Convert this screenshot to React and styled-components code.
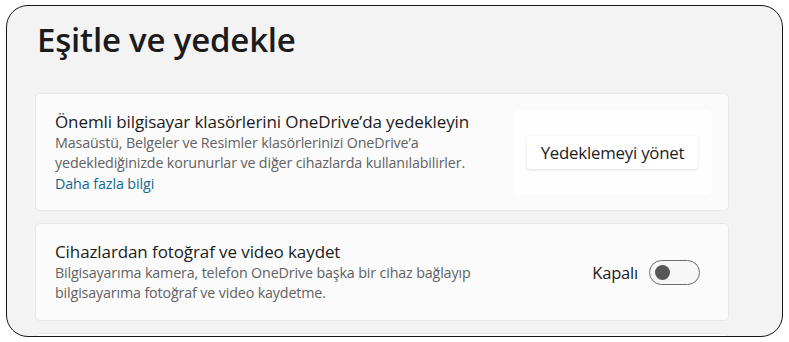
import React from "react";
import styled, { createGlobalStyle } from "styled-components";

const Global = createGlobalStyle`
  html, body { margin: 0; padding: 0; background: #ffffff; }
  body { font-family: "Open Sans", "Noto Sans", sans-serif; }
  #root { width: 789px; height: 342px; overflow: hidden; }
`;

const Frame = styled.div`
  box-sizing: border-box;
  margin: 5px 0 0 6px;
  width: 777px;
  height: 332px;
  border: 1.5px solid #151515;
  border-radius: 22px;
  background: #f3f3f3;
  overflow: hidden;
  padding: 12px 53px 0 28px;
  display: flex;
  flex-direction: column;
`;

const Title = styled.h1`
  margin: 0 0 0 2px;
  font-size: 33px;
  line-height: 44px;
  font-weight: 600;
  color: #1b1b1b;
  letter-spacing: -0.2px;
`;

const Cards = styled.div`
  margin-top: 31px;
  display: flex;
  flex-direction: column;
  gap: 12px;
`;

const Card = styled.div`
  box-sizing: border-box;
  height: ${(p) => p.$h}px;
  flex: none;
  background: #fbfbfb;
  border: 1px solid #e8e8e8;
  border-radius: 5px;
  display: flex;
  align-items: center;
  justify-content: space-between;
  padding: 0 28px 0 19px;
`;

const Text = styled.div`
  display: flex;
  flex-direction: column;
`;

const CardTitle = styled.div`
  font-size: 17px;
  line-height: 22px;
  color: #1b1b1b;
  letter-spacing: -0.1px;
`;

const Desc = styled.div`
  font-size: 14.3px;
  line-height: 20px;
  color: #626262;
  letter-spacing: -0.15px;
`;

const Link = styled.a`
  font-size: 14.3px;
  line-height: 21px;
  color: #11698c;
  text-decoration: none;
  letter-spacing: -0.1px;
`;

const ButtonArea = styled.div`
  background: #fefefe;
  border-radius: 6px;
  padding: 26px 14px;
  margin-right: -12px;
`;

const Button = styled.button`
  font-family: "Open Sans", "Noto Sans", sans-serif;
  width: 171px;
  height: 33px;
  border: none;
  border-radius: 4px;
  background: #ffffff;
  box-shadow: 0 1px 3px rgba(0, 0, 0, 0.13);
  font-size: 16.8px;
  color: #1b1b1b;
  letter-spacing: -0.2px;
  padding: 0;
`;

const ToggleRow = styled.div`
  display: flex;
  align-items: center;
  gap: 11px;
`;

const ToggleLabel = styled.span`
  font-size: 16.5px;
  color: #1b1b1b;
  letter-spacing: -0.2px;
`;

const Switch = styled.div`
  box-sizing: border-box;
  width: 51px;
  height: 25px;
  border: 1px solid #6e6e6e;
  border-radius: 13px;
  background: #f7f7f7;
  display: flex;
  align-items: center;
  padding-left: 5px;
`;

const Knob = styled.div`
  width: 15px;
  height: 15px;
  border-radius: 50%;
  background: #575757;
`;

export default function App() {
  return (
    <>
      <Global />
      <Frame>
        <Title>Eşitle ve yedekle</Title>
        <Cards>
          <Card $h={118}>
            <Text>
              <CardTitle>Önemli bilgisayar klasörlerini OneDrive’da yedekleyin</CardTitle>
              <Desc>
                Masaüstü, Belgeler ve Resimler klasörlerinizi OneDrive’a
                <br />
                yedeklediğinizde korunurlar ve diğer cihazlarda kullanılabilirler.
              </Desc>
              <Link href="#">Daha fazla bilgi</Link>
            </Text>
            <ButtonArea>
              <Button>Yedeklemeyi yönet</Button>
            </ButtonArea>
          </Card>
          <Card $h={98}>
            <Text>
              <CardTitle>Cihazlardan fotoğraf ve video kaydet</CardTitle>
              <Desc>
                Bilgisayarıma kamera, telefon OneDrive başka bir cihaz bağlayıp
                <br />
                bilgisayarıma fotoğraf ve video kaydetme.
              </Desc>
            </Text>
            <ToggleRow>
              <ToggleLabel>Kapalı</ToggleLabel>
              <Switch>
                <Knob />
              </Switch>
            </ToggleRow>
          </Card>
          <Card $h={98} />
        </Cards>
      </Frame>
    </>
  );
}
